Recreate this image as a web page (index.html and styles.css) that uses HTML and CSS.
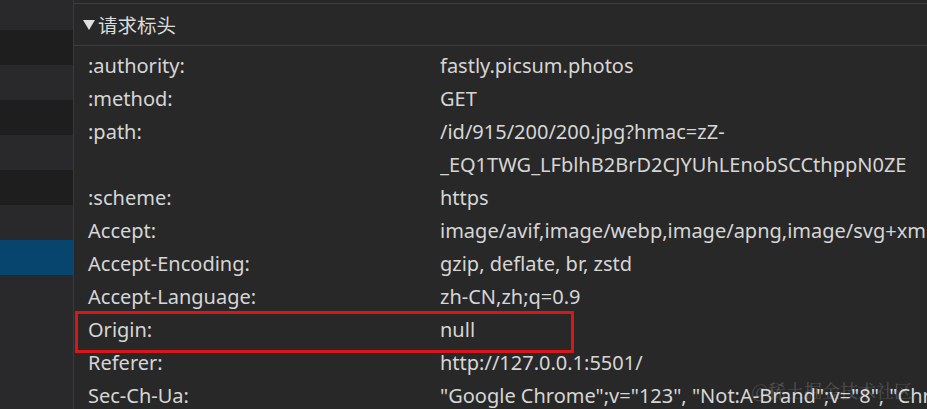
FILE: index.html
```html
<!DOCTYPE html>
<html lang="zh-CN">
<head>
<meta charset="utf-8">
<title>请求标头</title>
<link rel="stylesheet" href="styles.css">
</head>
<body>
<div class="app">
  <aside class="sidebar">
    <div class="stripe light first"></div>
    <div class="stripe dark"></div>
    <div class="stripe light"></div>
    <div class="stripe dark"></div>
    <div class="stripe light"></div>
    <div class="stripe dark"></div>
    <div class="stripe light"></div>
    <div class="stripe selected"></div>
    <div class="stripe light rest"></div>
  </aside>
  <main class="main">
    <div class="topbar"></div>
    <div class="section-header">
      <svg class="caret" width="12" height="10" viewBox="0 0 12 10"><polygon points="0,0 12,0 6,10" fill="#e0e0e0"/></svg>
      <span class="section-title">请求标头</span>
    </div>
    <div class="headers">
      <div class="row"><span class="name">:authority:</span><span class="value">fastly.picsum.photos</span></div>
      <div class="row"><span class="name">:method:</span><span class="value">GET</span></div>
      <div class="row"><span class="name">:path:</span><span class="value">/id/915/200/200.jpg?hmac=zZ-<br>_EQ1TWG_LFblhB2BrD2CJYUhLEnobSCCthppN0ZE</span></div>
      <div class="row"><span class="name">:scheme:</span><span class="value">https</span></div>
      <div class="row"><span class="name">Accept:</span><span class="value">image/avif,image/webp,image/apng,image/svg+xml,image/*,*/*;q=0.8</span></div>
      <div class="row"><span class="name">Accept-Encoding:</span><span class="value">gzip, deflate, br, zstd</span></div>
      <div class="row"><span class="name">Accept-Language:</span><span class="value">zh-CN,zh;q=0.9</span></div>
      <div class="row highlighted"><span class="name">Origin:</span><span class="value">null</span></div>
      <div class="row"><span class="name">Referer:</span><span class="value">http://127.0.0.1:5501/</span></div>
      <div class="row"><span class="name">Sec-Ch-Ua:</span><span class="value">"Google Chrome";v="123", "Not:A-Brand";v="8", "Chromium";v="123"</span></div>
    </div>
    <div class="watermark">@稀土掘金技术社区</div>
  </main>
</div>
</body>
</html>
```

FILE: styles.css
```css
* { box-sizing: border-box; }
html, body {
  margin: 0;
  padding: 0;
  width: 927px;
  height: 409px;
  overflow: hidden;
  background: #282828;
}
.app {
  display: flex;
  width: 927px;
  height: 409px;
  font-family: "Noto Sans", "Noto Sans CJK SC", sans-serif;
  color: #d6d6d6;
}
.sidebar {
  width: 74px;
  flex: none;
  display: flex;
  flex-direction: column;
  border-right: 1px solid #3a3a3a;
  background: #29292b;
}
.stripe { height: 35px; flex: none; }
.stripe.first { height: 30px; }
.stripe.light { background: #29292b; }
.stripe.dark { background: #1e1e1e; }
.stripe.selected { background: #07456f; }
.stripe.rest { flex: 1; }
.main {
  flex: 1;
  position: relative;
  min-width: 0;
  overflow: hidden;
  display: flex;
  flex-direction: column;
}
.topbar {
  height: 4px;
  border-bottom: 1px solid #3d3d3d;
  flex: none;
}
.section-header {
  height: 42px;
  flex: none;
  display: flex;
  align-items: center;
  padding-left: 9px;
  border-bottom: 1px solid #3d3d3d;
  gap: 3px;
}
.caret { display: block; margin-top: 1px; }
.section-title {
  font-size: 19.5px;
  color: #dcdcdc;
  font-family: "Noto Sans CJK SC", sans-serif;
  line-height: 1;
}
.headers {
  padding-top: 3px;
  display: flex;
  flex-direction: column;
}
.row {
  display: grid;
  grid-template-columns: 352px 1fr;
  padding-left: 14px;
  font-size: 20px;
  line-height: 33px;
  position: relative;
}
.name { white-space: nowrap; }
.value { white-space: nowrap; overflow: hidden; }
.highlighted::after {
  content: "";
  position: absolute;
  left: 1px;
  top: -2px;
  width: 493px;
  height: 36px;
  border: 3px solid #d9171b;
}
.watermark {
  position: absolute;
  right: 15px;
  bottom: 6px;
  font-family: "Noto Serif CJK SC", "Noto Sans CJK SC", serif;
  font-size: 18px;
  color: rgba(255, 255, 255, 0.2);
  pointer-events: none;
}
```
